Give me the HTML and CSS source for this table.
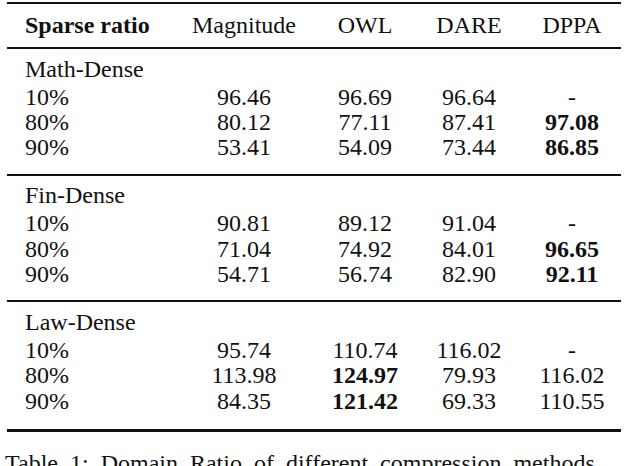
FILE: index.html
```html
<!DOCTYPE html>
<html>
<head>
<meta charset="utf-8">
<link rel="stylesheet" href="styles.css">
</head>
<body>
<div class="page">
  <table class="results">
    <colgroup>
      <col class="c-ratio">
      <col class="c-mag">
      <col class="c-owl">
      <col class="c-dare">
      <col class="c-dppa">
    </colgroup>
    <thead>
      <tr>
        <th class="label">Sparse ratio</th>
        <th>Magnitude</th>
        <th>OWL</th>
        <th>DARE</th>
        <th class="last">DPPA</th>
      </tr>
    </thead>
    <tbody class="group">
      <tr class="group-title"><td class="label">Math-Dense</td><td></td><td></td><td></td><td class="last"></td></tr>
      <tr><td class="label">10%</td><td>96.46</td><td>96.69</td><td>96.64</td><td class="last">-</td></tr>
      <tr><td class="label">80%</td><td>80.12</td><td>77.11</td><td>87.41</td><td class="last best">97.08</td></tr>
      <tr class="group-end"><td class="label">90%</td><td>53.41</td><td>54.09</td><td>73.44</td><td class="last best">86.85</td></tr>
    </tbody>
    <tbody class="group">
      <tr class="group-title"><td class="label">Fin-Dense</td><td></td><td></td><td></td><td class="last"></td></tr>
      <tr><td class="label">10%</td><td>90.81</td><td>89.12</td><td>91.04</td><td class="last">-</td></tr>
      <tr><td class="label">80%</td><td>71.04</td><td>74.92</td><td>84.01</td><td class="last best">96.65</td></tr>
      <tr class="group-end"><td class="label">90%</td><td>54.71</td><td>56.74</td><td>82.90</td><td class="last best">92.11</td></tr>
    </tbody>
    <tbody class="group final">
      <tr class="group-title"><td class="label">Law-Dense</td><td></td><td></td><td></td><td class="last"></td></tr>
      <tr><td class="label">10%</td><td>95.74</td><td>110.74</td><td>116.02</td><td class="last">-</td></tr>
      <tr><td class="label">80%</td><td>113.98</td><td class="best">124.97</td><td>79.93</td><td class="last">116.02</td></tr>
      <tr class="group-end"><td class="label">90%</td><td>84.35</td><td class="best">121.42</td><td>69.33</td><td class="last">110.55</td></tr>
    </tbody>
  </table>
  <p class="caption">Table 1: Domain Ratio of different compression methods</p>
</div>
</body>
</html>
```

FILE: styles.css
```css
html, body {
  margin: 0;
  padding: 0;
  background: #ffffff;
}

body {
  width: 626px;
  height: 466px;
  overflow: hidden;
}

.page {
  padding: 2px 5px 0 7px;
  font-family: "Liberation Serif", "Times New Roman", serif;
  font-size: 24px;
  color: #111111;
}

.results {
  width: 614px;
  border-collapse: collapse;
  table-layout: fixed;
  border-top: 2px solid #111111;
  border-bottom: 3px solid #111111;
}

.c-ratio { width: 179px; }
.c-mag { width: 116px; }
.c-owl { width: 126px; }
.c-dare { width: 82px; }
.c-dppa { width: 111px; }

.results th,
.results td {
  padding: 0;
  text-align: center;
  white-space: nowrap;
  line-height: 25.3px;
  height: 25.3px;
}

.results th {
  height: 43px;
  font-weight: normal;
  vertical-align: middle;
}

.results th.label {
  font-weight: bold;
}

.results .label {
  text-align: left;
  padding-left: 18px;
}

.results .last {
  padding-left: 13px;
}

.results thead tr {
  border-bottom: 2px solid #111111;
}

.group {
  border-top: 2px solid #111111;
}

.results thead + .group {
  border-top: none;
}

.group-title td {
  padding-top: 7.5px;
  padding-bottom: 3px;
}

.group-end td {
  padding-bottom: 13px;
}

.final .group-end td {
  padding-bottom: 15px;
}

.best {
  font-weight: bold;
}

.caption {
  margin: 18px 0 0 -2px;
  line-height: 26px;
  white-space: nowrap;
  word-spacing: 6px;
}
```
